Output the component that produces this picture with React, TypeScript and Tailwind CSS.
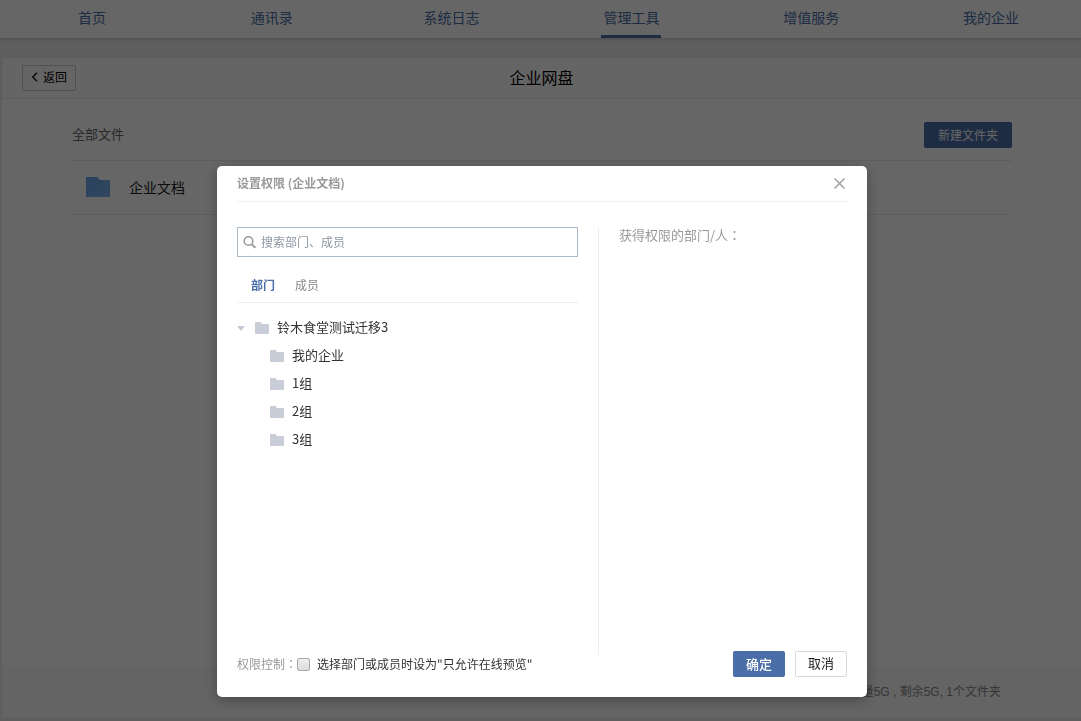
import React from "react"

const navItems = ["首页", "通讯录", "系统日志", "管理工具", "增值服务", "我的企业"]
const activeNav = "管理工具"

const groups = ["我的企业", "1组", "2组", "3组"]

// The colon sits in the middle of its box in the TC face
const Colon = () => <span className="font-['Noto_Sans_CJK_TC',sans-serif]">：</span>

const SmallFolderIcon = () => (
  <svg className="h-3 w-[14px] shrink-0" viewBox="0 0 14 12" aria-hidden="true">
    <path d="M0 1a1 1 0 0 1 1-1h4.5l1.5 2h6a1 1 0 0 1 1 1v8a1 1 0 0 1-1 1H1a1 1 0 0 1-1-1z" fill="#c8cdd7" />
  </svg>
)

const LargeFolderIcon = () => (
  <svg className="h-5 w-6 shrink-0" viewBox="0 0 24 20" aria-hidden="true">
    <defs>
      <linearGradient id="folder" x1="0" y1="0" x2="1" y2="1">
        <stop offset="0.2" stopColor="#6ba6e8" />
        <stop offset="0.5" stopColor="#70a9ea" />
        <stop offset="0.52" stopColor="#78b0ee" />
        <stop offset="1" stopColor="#7aaeea" />
      </linearGradient>
    </defs>
    <path d="M0 .6Q0 0 .6 0h10.6l2.6 3h9.6q.6 0 .6.6v15.8q0 .6-.6.6H.6q-.6 0-.6-.6z" fill="url(#folder)" />
  </svg>
)

const TopNav = () => (
  <nav className="relative grid h-[38px] grid-cols-6 bg-white pl-[2px] shadow-[0_1px_3px_rgba(0,0,0,0.2)]">
    {navItems.map((item) => (
      <div key={item} className="flex justify-center">
        <a
          href="#"
          className={
            item === activeNav
              ? "h-[38px] w-[60px] border-b-3 border-[#4a6ea8] text-center text-sm leading-[34px] text-[#4a6ea8]"
              : "h-[38px] w-[60px] text-center text-sm leading-[34px] text-[#4a6ea8]"
          }
        >
          {item}
        </a>
      </div>
    ))}
  </nav>
)

const DrivePanel = () => (
  <main className="mt-5 mb-[3px] ml-[2px] flex flex-1 flex-col bg-white">
    <header className="grid h-[41px] grid-cols-3 items-center border-b border-[#e8e8e8] bg-[#fcfcfc] px-5">
      <button
        type="button"
        className="flex h-[26px] w-[54px] items-center justify-center gap-1 rounded-xs border border-[#c8c8c8] pb-[2px] text-xs text-black"
      >
        <svg className="h-[10px] w-2" viewBox="0 0 8 10" aria-hidden="true">
          <path d="M6 .8 1.8 5 6 9.2" fill="none" stroke="#222" strokeWidth="1.6" />
        </svg>
        返回
      </button>
      <h1 className="pb-[2px] text-center text-base text-black">企业网盘</h1>
    </header>

    <section className="mr-[69px] ml-[70px] flex-1">
      <div className="flex h-[62px] items-center justify-between border-b border-[#ebebeb] pt-[10px]">
        <h2 className="pb-[2px] text-[13px] leading-5 text-[#666]">全部文件</h2>
        <button type="button" className="h-[26px] w-[88px] rounded-xs bg-[#4a6ea8] text-xs text-white">
          新建文件夹
        </button>
      </div>
      <a href="#" className="flex h-[54px] items-center gap-[19px] border-b border-[#ebebeb] pb-[2px] pl-[14px] text-sm text-[#222]">
        <LargeFolderIcon />
        企业文档
      </a>
    </section>

    <footer className="h-[52px] bg-[#fafafa] pr-20 text-right font-['Liberation_Sans','Noto_Sans_CJK_SC',sans-serif] text-xs leading-[52px] text-[#888]">
      总容量5G , 剩余5G, 1个文件夹
    </footer>
  </main>
)

const DepartmentPicker = () => (
  <div className="min-w-0 flex-1 pr-5">
    <label className="flex h-[30px] items-center gap-1 border border-[#adbac8] pl-[5px]">
      <svg className="h-[14px] w-[14px] shrink-0" viewBox="0 0 14 14" aria-hidden="true">
        <circle cx="5.5" cy="6" r="4.3" fill="none" stroke="#9a9a9a" strokeWidth="1.6" />
        <path d="m8.6 9.1 3.7 3.7" stroke="#9a9a9a" strokeWidth="2" />
      </svg>
      <input
        type="text"
        aria-label="搜索部门、成员"
        placeholder="搜索部门、成员"
        className="h-7 min-w-0 flex-1 pb-[2px] text-xs outline-none placeholder:text-[#9098a3]"
      />
    </label>

    <div className="flex h-[46px] gap-5 border-b border-[#ededed] pt-[10px] pl-[14px] text-xs leading-9">
      <button type="button" className="h-9 font-bold text-[#4a6ea8]">部门</button>
      <button type="button" className="h-9 text-[#888]">成员</button>
    </div>

    <ul className="mt-[11px] text-[13px] text-[#333]">
      <li>
        <div className="flex h-7 items-center">
          <svg className="mr-[10px] h-[5px] w-2" viewBox="0 0 8 5" aria-hidden="true">
            <path d="M0 0h8L4 5z" fill="#c3cbd8" />
          </svg>
          <SmallFolderIcon />
          <span className="pb-[2px] pl-2">铃木食堂测试迁移3</span>
        </div>
        <ul className="pl-[33px]">
          {groups.map((group) => (
            <li key={group} className="flex h-7 items-center">
              <SmallFolderIcon />
              <span className="pb-[2px] pl-2">{group}</span>
            </li>
          ))}
        </ul>
      </li>
    </ul>
  </div>
)

const PermissionDialog = () => (
  <div className="fixed inset-0 flex items-start justify-center bg-black/60 pt-[166px] pl-[3px]">
    <div
      role="dialog"
      aria-labelledby="dialog-title"
      className="w-full max-w-[650px] rounded-[5px] bg-white px-5 pb-5 shadow-[0_3px_14px_rgba(0,0,0,0.3)]"
    >
      <div className="flex h-9 items-center justify-between border-b border-[#f0f0f0]">
        <h2 id="dialog-title" className="pb-[2px] text-xs font-bold text-[#999]">设置权限 (企业文档)</h2>
        <button type="button" aria-label="关闭" className="p-[2px]">
          <svg className="h-[11px] w-[11px]" viewBox="0 0 11 11" aria-hidden="true">
            <path d="m.5.5 10 10m0-10-10 10" stroke="#a0a0a0" strokeWidth="1.5" />
          </svg>
        </button>
      </div>

      <div className="mt-[25px] flex min-h-[428px]">
        <DepartmentPicker />
        <div className="w-[249px] border-l border-[#ededed] pl-5 text-[13px] leading-4 text-[#999]">
          获得权限的部门/人<Colon />
        </div>
      </div>

      <div className="-mt-1 flex h-[26px] items-center gap-[10px]">
        <div className="flex flex-1 items-center text-xs">
          <span className="text-[#999]">权限控制<Colon /></span>
          <input
            id="preview-only"
            type="checkbox"
            className="h-[13px] w-[13px] appearance-none rounded-xs border border-[#a9a9a9] bg-linear-to-b from-[#ededed] to-[#dcdcdc] checked:bg-[#4a6ea8]"
          />
          <label htmlFor="preview-only" className="pl-[7px] text-[#333]">
            选择部门或成员时设为"只允许在线预览"
          </label>
        </div>
        <button type="button" className="h-[26px] w-[52px] rounded-xs bg-[#4a6ea8] text-[13px] font-medium text-white">
          确定
        </button>
        <button type="button" className="h-[26px] w-[52px] rounded-xs border border-[#d9d9d9] bg-white pb-[2px] text-[13px] leading-4 text-[#222]">
          取消
        </button>
      </div>
    </div>
  </div>
)

const App = () => {
  return (
    <div className="flex min-h-screen flex-col bg-[#ebebeb] font-['Noto_Sans_CJK_SC',sans-serif]">
      <TopNav />
      <DrivePanel />
      <PermissionDialog />
    </div>
  )
}

export default App
